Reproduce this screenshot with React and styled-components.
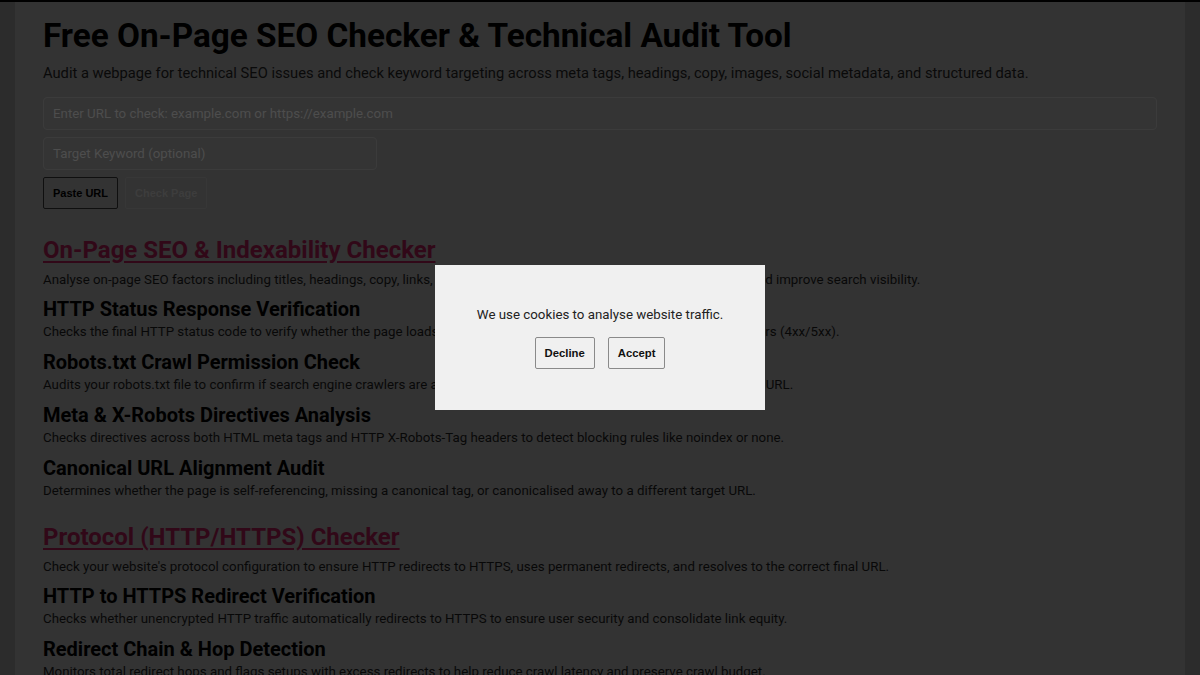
import React from 'react';
import styled, { createGlobalStyle } from 'styled-components';

const GlobalStyle = createGlobalStyle`
  html, body {
    margin: 0;
    padding: 0;
  }
  body {
    background: #585858;
    border-top: 2px solid #000;
    font-family: Roboto, "Liberation Sans", Arial, sans-serif;
    color: #111;
    overflow: hidden;
    height: 675px;
    box-sizing: border-box;
  }
`;

const Page = styled.main`
  max-width: 1170px;
  margin: 0 auto;
  background: #666;
  padding: 14px 28px 40px;
  box-sizing: border-box;
  min-height: 100vh;
`;

const Title = styled.h1`
  font-size: 33.3px;
  font-weight: 700;
  line-height: 40px;
  margin: 0 0 6px;
  color: #000;
`;

const Lead = styled.p`
  font-size: 14.7px;
  line-height: 22px;
  color: #141414;
  margin: 0 0 13px;
`;

const Form = styled.form`
  display: flex;
  flex-direction: column;
  gap: 7px;
`;

const Input = styled.input`
  box-sizing: border-box;
  height: 33px;
  width: ${p => (p.$narrow ? '334px' : '100%')};
  padding: 0 9px;
  font-family: Roboto, sans-serif;
  font-size: 13.3px;
  background: #696969;
  border: 1px solid #777;
  border-radius: 4px;
  color: #000;
  &::placeholder {
    color: #9a9a9a;
  }
`;

const Actions = styled.div`
  display: flex;
  gap: 7px;
`;

const Button = styled.button`
  height: 32px;
  padding: 0 9px;
  font-family: "Liberation Sans", Arial, sans-serif;
  font-size: 11px;
  font-weight: 700;
  background: transparent;
  color: #000;
  border: 1px solid #1e1e1e;
  border-radius: 2px;
  &:disabled {
    color: #7a7a7a;
    border-color: #6e6e6e;
  }
`;

const Section = styled.section`
  margin-top: ${p => (p.$first ? '25px' : '20px')};
`;

const SectionLink = styled.a`
  display: inline-block;
  font-size: 24px;
  font-weight: 700;
  line-height: 32px;
  color: #621030;
  text-decoration: underline;
  text-underline-offset: 3px;
  margin-bottom: 4px;
`;

const Blurb = styled.p`
  font-size: 13.3px;
  line-height: 20px;
  color: #111;
  margin: 0 0 6px;
`;

const Check = styled.h3`
  font-size: 20px;
  font-weight: 700;
  line-height: 26px;
  margin: 0;
  color: #000;
`;

const CheckText = styled.p`
  font-size: 13.3px;
  line-height: 20px;
  color: #111;
  margin: 0 0 7px;
`;

const Backdrop = styled.div`
  position: fixed;
  inset: 0;
  background: rgba(0, 0, 0, 0.5);
  display: flex;
  align-items: center;
  justify-content: center;
`;

const Dialog = styled.div`
  width: 330px;
  height: 145px;
  box-sizing: border-box;
  background: #f0f0f0;
  display: flex;
  flex-direction: column;
  align-items: center;
  justify-content: center;
  gap: 12px;
  padding-bottom: 2px;
`;

const DialogText = styled.p`
  margin: 0;
  font-size: 13.3px;
  line-height: 20px;
  color: #222;
`;

const DialogButtons = styled.div`
  display: flex;
  gap: 13px;
`;

const DialogButton = styled.button`
  height: 32px;
  padding: 0 9px;
  font-family: "Liberation Sans", Arial, sans-serif;
  font-size: 11.3px;
  font-weight: 700;
  color: #111;
  background: #f0f0f0;
  border: 1px solid #8a8a8a;
  border-radius: 2px;
`;

const sections = [
  {
    title: 'On-Page SEO & Indexability Checker',
    blurb:
      'Analyse on-page SEO factors including titles, headings, copy, links, images, schema and indexability signals to fix issues and improve search visibility.',
    checks: [
      ['HTTP Status Response Verification', 'Checks the final HTTP status code to verify whether the page loads successfully (200) or returns redirects (3xx) or any errors (4xx/5xx).'],
      ['Robots.txt Crawl Permission Check', 'Audits your robots.txt file to confirm if search engine crawlers are allowed to access and crawl the submitted live webpage URL.'],
      ['Meta & X-Robots Directives Analysis', 'Checks directives across both HTML meta tags and HTTP X-Robots-Tag headers to detect blocking rules like noindex or none.'],
      ['Canonical URL Alignment Audit', 'Determines whether the page is self-referencing, missing a canonical tag, or canonicalised away to a different target URL.'],
    ],
  },
  {
    title: 'Protocol (HTTP/HTTPS) Checker',
    blurb:
      "Check your website's protocol configuration to ensure HTTP redirects to HTTPS, uses permanent redirects, and resolves to the correct final URL.",
    checks: [
      ['HTTP to HTTPS Redirect Verification', 'Checks whether unencrypted HTTP traffic automatically redirects to HTTPS to ensure user security and consolidate link equity.'],
      ['Redirect Chain & Hop Detection', 'Monitors total redirect hops and flags setups with excess redirects to help reduce crawl latency and preserve crawl budget.'],
    ],
  },
];

export default function App() {
  return (
    <>
      <GlobalStyle />
      <Page>
        <Title>Free On-Page SEO Checker &amp; Technical Audit Tool</Title>
        <Lead>
          Audit a webpage for technical SEO issues and check keyword targeting across meta tags, headings, copy, images, social metadata, and structured data.
        </Lead>
        <Form onSubmit={e => e.preventDefault()}>
          <Input placeholder="Enter URL to check: example.com or https://example.com" />
          <Input $narrow placeholder="Target Keyword (optional)" />
          <Actions>
            <Button type="button">Paste URL</Button>
            <Button type="submit" disabled>Check Page</Button>
          </Actions>
        </Form>
        {sections.map((s, i) => (
          <Section key={s.title} $first={i === 0}>
            <SectionLink href="#">{s.title}</SectionLink>
            <Blurb>{s.blurb}</Blurb>
            {s.checks.map(([h, t]) => (
              <div key={h}>
                <Check>{h}</Check>
                <CheckText>{t}</CheckText>
              </div>
            ))}
          </Section>
        ))}
      </Page>
      <Backdrop>
        <Dialog role="dialog">
          <DialogText>We use cookies to analyse website traffic.</DialogText>
          <DialogButtons>
            <DialogButton>Decline</DialogButton>
            <DialogButton>Accept</DialogButton>
          </DialogButtons>
        </Dialog>
      </Backdrop>
    </>
  );
}
